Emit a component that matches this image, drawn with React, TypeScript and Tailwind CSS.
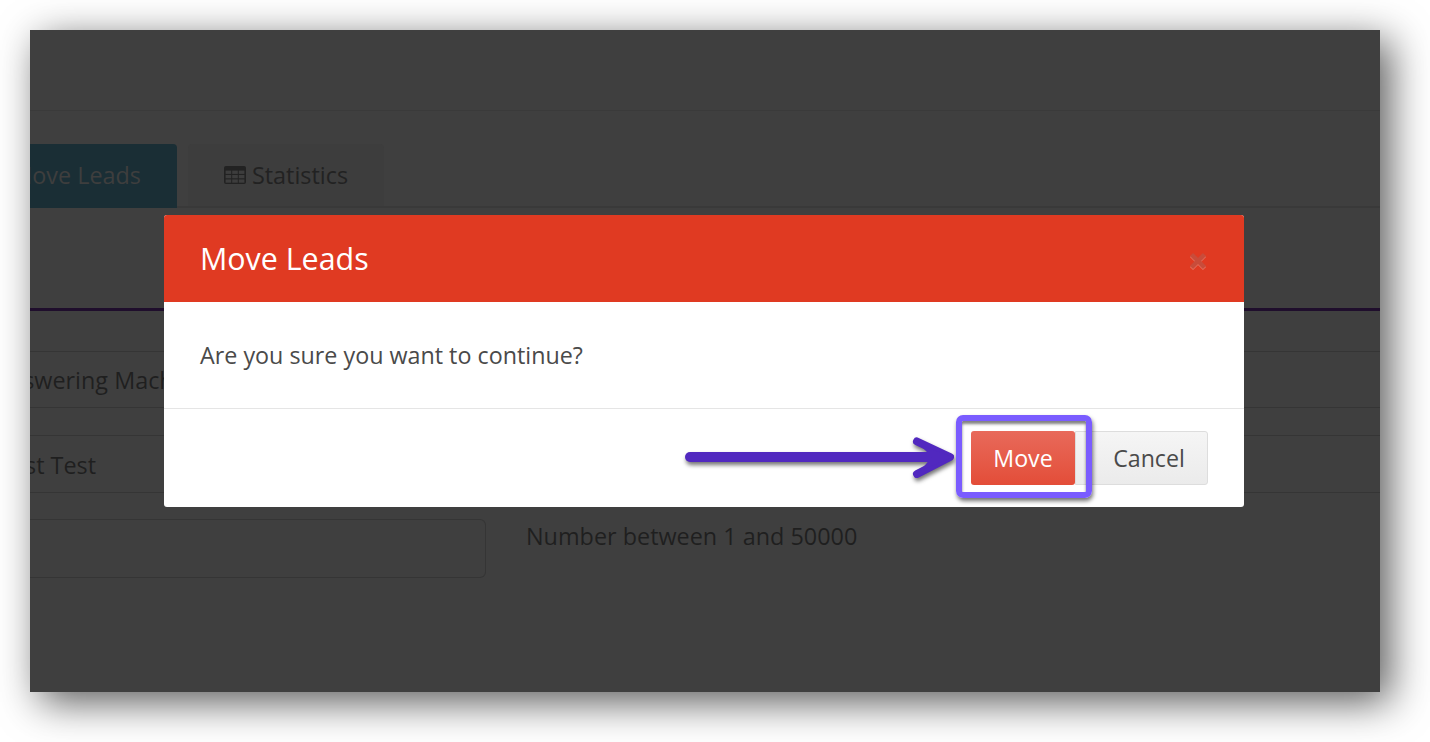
const font = "font-['Open_Sans','Liberation_Sans',sans-serif]";

function TableIcon() {
  return (
    <svg width="22" height="18" viewBox="0 0 22 18" className="-mt-[2px] shrink-0">
      <rect x="0" y="0" width="22" height="18" rx="2" fill="#222" />
      {[4.6, 9, 13.4].map((y) =>
        [1.6, 8.2, 14.8].map((x) => (
          <rect key={`${x}-${y}`} x={x} y={y} width="5.6" height="3.3" fill="#3d3d3d" />
        )),
      )}
    </svg>
  );
}

function Background() {
  return (
    <div className="h-full overflow-hidden">
      <div className="h-[81px] border-b border-[#3a3a3a]" />
      <div className="flex h-[97px] items-end gap-[11px] border-b-2 border-[#393939]">
        <div className="-mb-[2px] flex h-[64px] w-[147px] items-center justify-end rounded-tr-[4px] bg-[#1a2e35] pr-[36px] text-[23.4px] text-[#3e3e3e]">
          <span className="whitespace-nowrap">Move Leads</span>
        </div>
        <div className="flex h-[62px] w-[196px] items-center justify-center gap-[6px] rounded-t-[4px] bg-[#3d3d3d] pt-[2px] text-[23.4px] text-[#222]">
          <TableIcon />
          <span>Statistics</span>
        </div>
      </div>
      <div className="h-[103px] border-b-[3px] border-[#1f0e2c]" />
      <div className="mt-[40px] flex h-[57px] items-center overflow-hidden border-y border-[#353535] pt-[2px] text-[23.4px] text-[#1f1f1f]">
        <span className="-ml-[36px] whitespace-nowrap">Answering Machine</span>
      </div>
      <div className="mt-[27px] flex h-[58px] items-center overflow-hidden border-y border-[#353535] pt-[3px] text-[23.4px] text-[#1f1f1f]">
        <span className="-ml-[5px] whitespace-nowrap">st Test</span>
      </div>
      <div className="mt-[26px] flex items-start gap-[40px]">
        <div className="h-[59px] w-[456px] rounded-r-[6px] border border-l-0 border-[#353535]" />
        <span className="text-[23.4px] leading-[35px] text-[#1f1f1f]">Number between 1 and 50000</span>
      </div>
    </div>
  );
}

function Modal() {
  return (
    <div className="absolute left-[134px] top-[185px] w-[1080px] overflow-hidden rounded-[3px] bg-white">
      <div className="flex h-[87px] items-center justify-between bg-[#e03a22] pl-[36px] pr-[37px]">
        <span className="text-[30.4px] text-white">Move Leads</span>
        <svg width="18" height="18" viewBox="0 0 18 18" className="mt-[4px]">
          <path d="M2.5 3.5L15.5 16.5M15.5 3.5L2.5 16.5" stroke="#e8735f" strokeWidth="4.4" fill="none" />
          <path d="M2.5 2.5L15.5 15.5M15.5 2.5L2.5 15.5" stroke="#c84c3a" strokeWidth="4.4" fill="none" />
        </svg>
      </div>
      <div className="flex h-[107px] items-center border-b border-[#e5e5e5] pl-[36px] text-[23.3px] text-[#4a4a4a]">
        Are you sure you want to continue?
      </div>
      <div className="flex h-[98px] items-start justify-end pr-[36px] pt-[22px]">
        <button className="h-[54px] w-[104px] rounded-[3px] bg-gradient-to-b from-[#e8695a] to-[#e34d38] text-[23.2px] text-white">
          Move
        </button>
        <button className="h-[54px] w-[133px] rounded-r-[3px] border border-[#ddd] bg-gradient-to-b from-[#f5f5f5] to-[#ebebeb] pl-[15px] text-[23.2px] text-[#4a4a4a]">
          Cancel
        </button>
      </div>
    </div>
  );
}

function Arrow() {
  return (
    <svg
      className="absolute left-[640px] top-[395px] drop-shadow-[1px_3px_2px_rgba(0,0,0,0.55)]"
      width="300"
      height="70"
      viewBox="0 0 300 70"
    >
      <path d="M20 32H270" stroke="#5128bf" strokeWidth="10" strokeLinecap="round" fill="none" />
      <path
        d="M247 16.5L280 32L247 49"
        stroke="#5128bf"
        strokeWidth="8"
        strokeLinecap="round"
        strokeLinejoin="round"
        fill="none"
      />
      <path d="M250 20L283 32L250 46L262 32Z" fill="#5128bf" />
    </svg>
  );
}

export default function App() {
  return (
    <div className={`h-[742px] w-[1430px] overflow-hidden bg-white pl-[30px] pt-[30px] ${font}`}>
      <div className="relative h-[662px] w-[1350px] bg-[#3f3f3f] shadow-[10px_10px_38px_rgba(0,0,0,0.65)]">
        <Background />
        <Modal />
        <Arrow />
        <div className="absolute left-[926px] top-[385px] h-[83px] w-[136px] rounded-[7px] border-[6px] border-[#7a5cff] shadow-[1px_3px_4px_rgba(0,0,0,0.55),inset_0_3px_3px_rgba(0,0,0,0.5)]" />
      </div>
    </div>
  );
}
